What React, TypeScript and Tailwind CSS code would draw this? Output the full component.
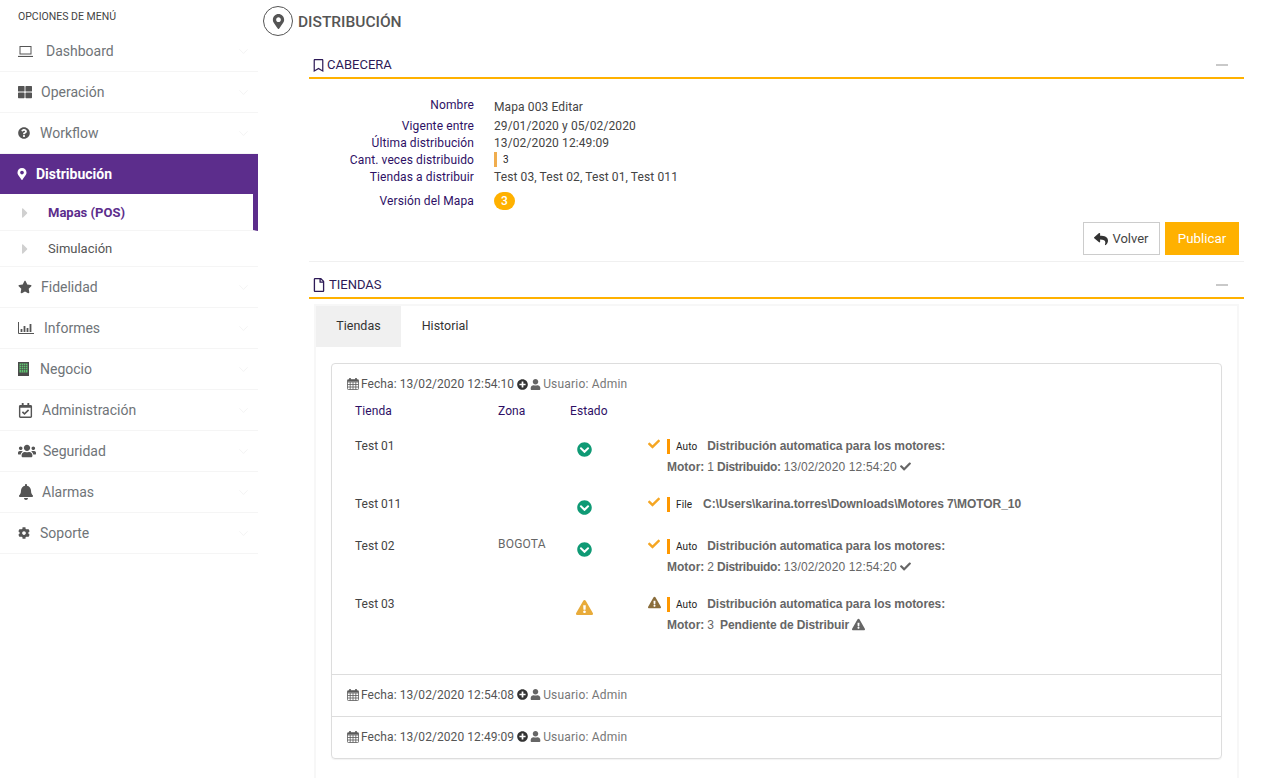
import React from "react";
import {
  FaThLarge, FaQuestionCircle, FaMapMarkerAlt, FaStar, FaRegCalendarCheck, FaUsers, FaBell, FaCog,
  FaCheck, FaChevronCircleDown, FaExclamationTriangle, FaPlusCircle, FaUser, FaReply,
  FaRegBookmark, FaRegFile, FaCaretRight,
} from "react-icons/fa";
import { ChevronDown } from "lucide-react";

const Laptop = () => (
  <svg width="15" height="11" viewBox="0 0 15 11" fill="none" stroke="#555" strokeWidth="1">
    <rect x="2" y="0.5" width="11" height="7.5" />
    <path d="M0 10.5h15" strokeWidth="1.2" />
  </svg>
);
const Bars = () => (
  <svg width="16" height="12" viewBox="0 0 16 12" fill="none" stroke="#555">
    <path d="M.5 0v11.5H16" />
    <path d="M3.5 10V7M6.5 10V4M9.5 10V6M12.5 10V2" strokeWidth="1.8" />
  </svg>
);
const Building = () => (
  <svg width="11" height="14" viewBox="0 0 11 14">
    <rect width="11" height="14" fill="#4a4a4a" />
    <path d="M1.5 1.5h8v9h-8z" fill="#5fc46f" />
    <path d="M1.5 3.5h8M1.5 5.5h8M1.5 7.5h8M3.5 1.5v9M5.5 1.5v9M7.5 1.5v9" stroke="#4a4a4a" strokeWidth=".6" />
  </svg>
);
const Calendar = () => (
  <svg width="12" height="12" viewBox="0 0 12 12" fill="none" stroke="#5a5a5a" strokeWidth=".8">
    <rect x=".5" y="1.5" width="11" height="10" rx=".8" />
    <path d="M.5 4h11M.5 6.5h11M.5 9h11M3.2 4v7.5M6 4v7.5M8.8 4v7.5" />
    <path d="M3 0v3M9 0v3" strokeWidth="1.6" />
    <path d="M.5 2.8h11" strokeWidth="1.6" />
  </svg>
);

const items: [string, React.ReactNode, string][] = [
  ["Dashboard", <Laptop />, "ml-[13px]"],
  ["Operación", <FaThLarge size={14} color="#555" />, "ml-[9px]"],
  ["Workflow", <FaQuestionCircle size={12} color="#555" />, "ml-[10px]"],
];
const items2: [string, React.ReactNode, string][] = [
  ["Fidelidad", <FaStar size={14} color="#555" />, "ml-[9px]"],
  ["Informes", <Bars />, "ml-[10px]"],
  ["Negocio", <Building />, "ml-[11px]"],
  ["Administración", <FaRegCalendarCheck size={15} color="#555" />, "ml-[9px]"],
  ["Seguridad", <FaUsers size={18} color="#555" />, "ml-[7px]"],
  ["Alarmas", <FaBell size={16} color="#555" />, "ml-[8px]"],
  ["Soporte", <FaCog size={12} color="#555" />, "ml-[10px]"],
];

function MenuItem({ label, icon, gap }: { label: string; icon: React.ReactNode; gap: string }) {
  return (
    <div className="h-[41px] flex items-center pl-[18px] pr-[7px] border-b border-[#f5f5f5] text-[14px] text-[#6f7478]">
      <span className="shrink-0 flex items-center">{icon}</span>
      <span className={gap}>{label}</span>
      <ChevronDown size={15} strokeWidth={1} color="#ececec" className="ml-auto" />
    </div>
  );
}

function Sidebar() {
  return (
    <aside className="w-[258px] shrink-0">
      <div className="h-[31px] pl-[18px] pt-[10px] text-[10.5px] leading-[13px] text-[#444]">OPCIONES DE MENÚ</div>
      {items.map(([l, i, g]) => <MenuItem key={l} label={l} icon={i} gap={g} />)}
      <div className="h-[40px] bg-[#5c2d8c] flex items-center pl-[16px] text-white text-[14px] font-bold">
        <FaMapMarkerAlt size={12} />
        <span className="ml-[8px]">Distribución</span>
      </div>
      <div className="h-[37px] flex items-center pl-[17px] pt-[1px] border-b border-[#f5f5f5] border-r-[5px] border-r-[#5c2d8c] text-[13px] font-bold text-[#5c2d8c]">
        <FaCaretRight size={16} color="#d0d0d0" />
        <span className="ml-[15px]">Mapas (POS)</span>
      </div>
      <div className="h-[36px] flex items-center pl-[17px] border-b border-[#f5f5f5] text-[13px] text-[#555]">
        <FaCaretRight size={16} color="#d0d0d0" />
        <span className="ml-[15px]">Simulación</span>
      </div>
      {items2.map(([l, i, g]) => <MenuItem key={l} label={l} icon={i} gap={g} />)}
    </aside>
  );
}

function SectionHead({ icon, title, gap }: { icon: React.ReactNode; title: string; gap: string }) {
  return (
    <div className="h-[26px] flex items-center border-b-2 border-[#ffb100] pl-[3px] pr-[16px] text-[13px] text-[#2d1a57]">
      {icon}
      <span className={gap}>{title}</span>
      <span className="ml-auto w-[12px] h-[2px] bg-[#c9c9c9]" />
    </div>
  );
}

function Row({ label, children, h }: { label: string; children: React.ReactNode; h: string }) {
  return (
    <div className={`flex items-center text-[12px] tracking-[0.11px] ${h}`}>
      <div className="w-[165px] text-right text-[#2e1065]">{label}</div>
      <div className="ml-[20px] text-[#444] flex items-center">{children}</div>
    </div>
  );
}

function FechaRow({ time, first }: { time: string; first?: boolean }) {
  return (
    <div className={`flex items-center pl-[15px] text-[12px] tracking-[0.07px] text-[#555] ${first ? "h-[40px]" : "h-[42px] pb-[2px] border-t border-[#ddd]"}`}>
      <Calendar />
      <span className="ml-[2px]">Fecha: {time}</span>
      <FaPlusCircle size={11} color="#333" className="ml-[3px]" />
      <FaUser size={11} color="#666" className="ml-[2px]" />
      <span className="ml-[2px] text-[#777] tracking-[0.2px]">Usuario: Admin</span>
    </div>
  );
}

const Tag = ({ t }: { t: string }) => (
  <span className="inline-flex items-center h-[15px] translate-y-[1px] border-l-[3px] border-[#ff9800] pl-[6px] text-[10px] text-[#222] font-normal tracking-[0.1px] font-['Roboto',sans-serif]">{t}</span>
);

const Auto = () => (
  <div className="flex items-center font-['Liberation_Sans',sans-serif] font-bold text-[12px] tracking-[-0.07px] text-[#666] h-[21px]">
    <Tag t="Auto" />
    <span className="ml-[10px]">Distribución automatica para los motores:</span>
  </div>
);

function Store({ name, zona, warn, h, children }: { name: string; zona?: string; warn?: boolean; h: string; children: React.ReactNode }) {
  return (
    <div className={`grid grid-cols-[143px_72px_78px_19px_1fr] ${h}`}>
      <div className="text-[#444] leading-[14px] pt-[4px]">{name}</div>
      <div className="text-[#666] leading-[14px] pt-[2px] tracking-[0.2px]">{zona}</div>
      <div className={warn ? "pt-[6px]" : "pt-[7px]"}>
        <div className="w-[29px] flex justify-center">
          {warn ? <FaExclamationTriangle size={17} color="#e8ab3a" /> : <FaChevronCircleDown size={15} color="#0f9a75" />}
        </div>
      </div>
      <div className="pt-[3px]">
        {warn ? <FaExclamationTriangle size={13} color="#8a6d3b" /> : <FaCheck size={12} color="#f5a623" />}
      </div>
      <div>{children}</div>
    </div>
  );
}

const Motor = ({ n, warn }: { n: number; warn?: boolean }) => (
  <div className="flex items-center font-['Liberation_Sans',sans-serif] text-[12px] text-[#666] h-[21px]">
    <b>Motor:</b>
    <span className="ml-[3px]">{n}</span>
    {warn ? (
      <>
        <b className="ml-[6px] tracking-[-0.1px]">Pendiente de Distribuir</b>
        <FaExclamationTriangle size={13} color="#666" className="ml-[3px]" />
      </>
    ) : (
      <>
        <b className="ml-[3px] tracking-[-0.3px]">Distribuido:</b>
        <span className="ml-[3px] tracking-[0.15px]">13/02/2020 12:54:20</span>
        <FaCheck size={11} color="#666" className="ml-[3px]" />
      </>
    )}
  </div>
);

export default function App() {
  return (
    <div className="flex w-[1272px] h-[778px] overflow-hidden bg-white font-['Roboto',sans-serif]">
      <Sidebar />
      <main className="flex-1 pl-[5px] pt-[6px]">
        <div className="flex items-center h-[30px]">
          <span className="w-[30px] h-[30px] rounded-full border border-[#555] flex items-center justify-center">
            <FaMapMarkerAlt size={15} color="#555" />
          </span>
          <h1 className="ml-[5px] pt-[3px] text-[15.5px] font-medium text-[#555]">DISTRIBUCIÓN</h1>
        </div>
        <div className="ml-[46px] w-[935px]">
          <div className="mt-[17px]">
            <SectionHead icon={<FaRegBookmark size={13} color="#2d1a57" />} title="CABECERA" gap="ml-[2px]" />
          </div>
          <div className="pt-[16px] border-b border-[#f0f0f0] h-[183px]">
            <Row label="Nombre" h="h-[20px]"><span className="translate-y-[2px]">Mapa 003 Editar</span></Row>
            <Row label="Vigente entre" h="h-[17px] mt-[2px]">29/01/2020 y 05/02/2020</Row>
            <Row label="Última distribución" h="h-[17px]">13/02/2020 12:49:09</Row>
            <Row label="Cant. veces distribuido" h="h-[17px]">
              <span className="border-l-[3px] border-[#f0ad4e] h-[15px] pl-[6px] text-[10px] text-[#222] flex items-center">3</span>
            </Row>
            <Row label="Tiendas a distribuir" h="h-[17px]">Test 03, Test 02, Test 01, Test 011</Row>
            <Row label="Versión del Mapa" h="h-[20px] mt-[6px]">
              <span className="w-[21px] h-[18px] rounded-full bg-[#ffb100] text-white text-[12px] font-medium flex items-center justify-center">3</span>
            </Row>
            <div className="flex justify-end gap-[5px] pr-[5px] mt-[11px]">
              <button className="h-[33px] w-[77px] border border-[#ccc] text-[13px] text-[#444] flex items-center justify-center gap-[4px]">
                <FaReply size={14} color="#333" />Volver
              </button>
              <button className="h-[33px] w-[74px] bg-[#ffb100] text-white text-[13.3px]">Publicar</button>
            </div>
          </div>
          <div className="mt-[11px]">
            <SectionHead icon={<FaRegFile size={14} color="#2d1a57" />} title="TIENDAS" gap="ml-[3px]" />
          </div>
          <div className="mt-[5px] mx-[5px] border-2 border-[#f7f7f7] border-b-0 h-[480px] text-[12px]">
            <div className="flex h-[41px] text-[12.5px] text-[#333]">
              <div className="w-[85px] bg-[#f0f0f0] flex items-center justify-center">Tiendas</div>
              <div className="w-[88px] flex items-center justify-center">Historial</div>
            </div>
            <div className="mt-[16px] mx-[15px] h-[396px] border border-[#ddd] rounded-[4px] shadow-[0_1px_1px_rgba(0,0,0,0.05)] flex flex-col">
              <FechaRow time="13/02/2020 12:54:10" first />
              <div className="flex-1 pl-[23px]">
                <div className="grid grid-cols-[143px_72px_1fr] h-[20px] -mt-[3px] items-center text-[#2e1065] tracking-[0.1px]">
                  <div>Tienda</div><div>Zona</div><div>Estado</div>
                </div>
                <div className="mt-[14px]">
                  <Store name="Test 01" h="h-[58px]"><Auto /><Motor n={1} /></Store>
                  <Store name="Test 011" h="h-[42px]">
                    <div className="flex items-center font-['Liberation_Sans',sans-serif] font-bold text-[12px] tracking-[-0.05px] text-[#666] h-[21px]">
                      <Tag t="File" /><span className="ml-[11px]">C:\Users\karina.torres\Downloads\Motores 7\MOTOR_10</span>
                    </div>
                  </Store>
                  <Store name="Test 02" zona="BOGOTA" h="h-[58px]"><Auto /><Motor n={2} /></Store>
                  <Store name="Test 03" warn h="h-[58px]"><Auto /><Motor n={3} warn /></Store>
                </div>
              </div>
              <FechaRow time="13/02/2020 12:54:08" />
              <FechaRow time="13/02/2020 12:49:09" />
            </div>
          </div>
        </div>
      </main>
    </div>
  );
}
